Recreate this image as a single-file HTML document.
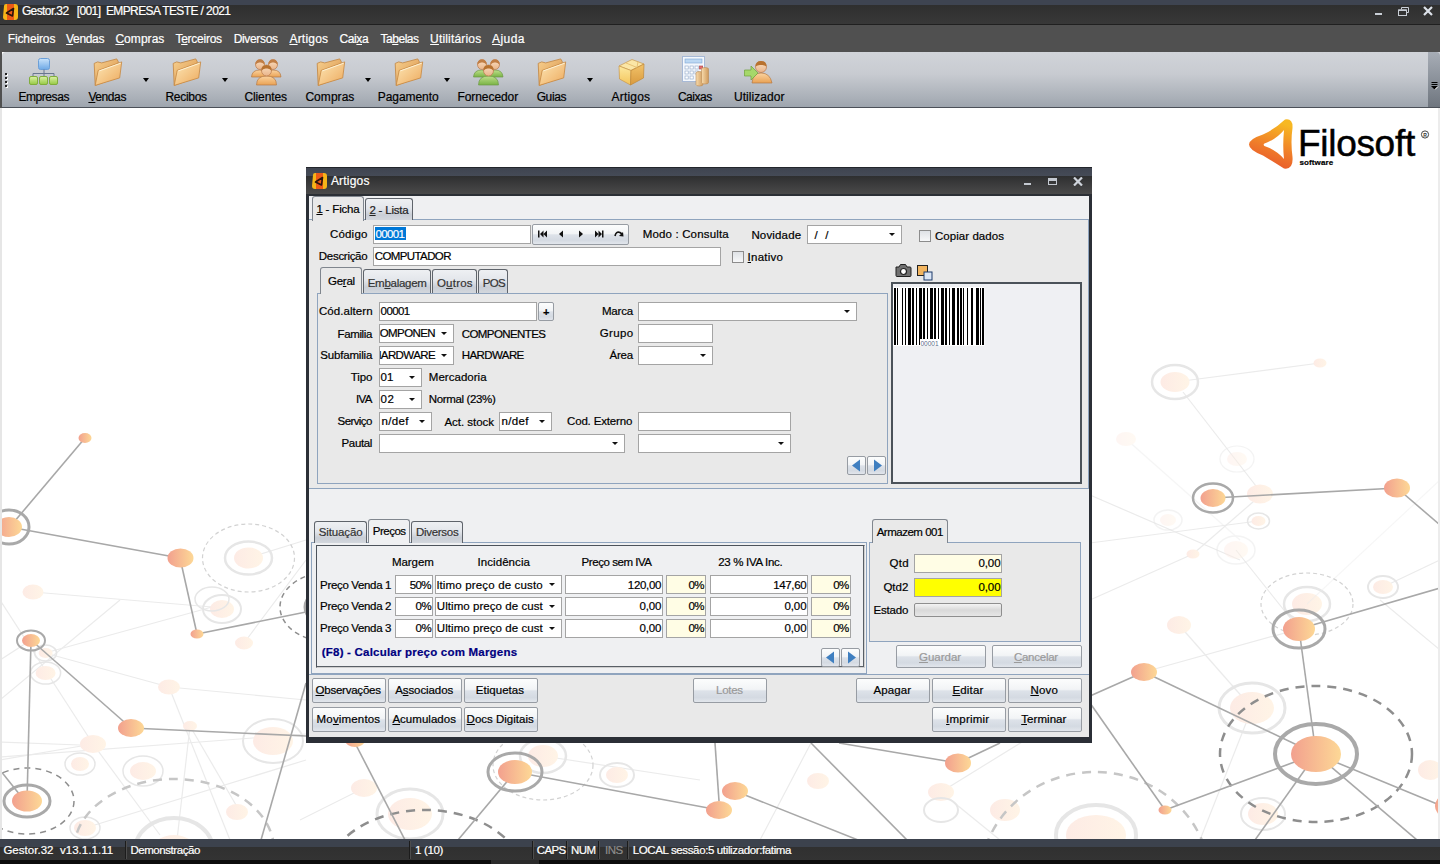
<!DOCTYPE html><html><head><meta charset="utf-8"><style>
*{margin:0;padding:0;box-sizing:border-box}
html,body{width:1440px;height:864px;overflow:hidden;background:#fff}
body{position:relative;font-family:"Liberation Sans",sans-serif;font-size:11.5px;color:#000}
.a{position:absolute}
.t{position:absolute;white-space:nowrap;line-height:13px;-webkit-text-stroke:0.2px currentColor}
u{text-decoration:underline;text-underline-offset:1px}
.inp{background:#fff;border:1px solid #a4a4a4}
.arr{position:absolute;width:0;height:0;border-left:3px solid transparent;border-right:3px solid transparent;border-top:3px solid #111}
.clip{position:absolute;overflow:hidden}
.btn{border:1px solid #979ca3;border-radius:2px;background:linear-gradient(#fcfdfd 0%,#f2f4f6 45%,#dde2e9 52%,#d4dae2 80%,#e2e6ec 100%)}
.tabi{border:1px solid #5f646b;border-bottom:none;border-radius:3px 3px 0 0;background:linear-gradient(#eef0f3 0%,#e3e6eb 45%,#c9ced6 75%,#d3d7dd 100%)}
.taba{border:1px solid #80868e;border-bottom:none;border-radius:3px 3px 0 0}
</style></head><body>
<svg class="a" style="left:0;top:0" width="1440" height="864" viewBox="0 0 1440 864">
<defs><linearGradient id="ng" x1="0" x2="1" y1="0" y2="0"><stop offset="0" stop-color="#f2a08e"/><stop offset="1" stop-color="#fdd896"/></linearGradient>
<linearGradient id="fg" x1="0" x2="1" y1="0" y2="0"><stop offset="0" stop-color="#fdebe5"/><stop offset="1" stop-color="#fff4e6"/></linearGradient>
<clipPath id="desk"><rect x="2" y="108" width="1436" height="731"/></clipPath></defs>
<rect x="0" y="108" width="2" height="731" fill="#e6e6e6"/><rect x="1438" y="108" width="2" height="731" fill="#ececec"/>
<g clip-path="url(#desk)">
<g stroke="#ebebeb" stroke-width="1.2" fill="none"><path d="M1175 382 L1320 363"/><path d="M1183 392 L1256 486"/><path d="M1261 495 L1193 554"/><path d="M1090 543 L1258 521"/><path d="M1090 495 L1240 560"/><path d="M33 592 L212 607"/><path d="M45 653 L212 607"/><path d="M45 653 L169 687"/><path d="M0 660 L31 640"/><path d="M244 643 L306 560"/><path d="M93 744 L160 835"/><path d="M190 726 L177 840"/><path d="M190 726 L236 805"/><path d="M0 742 L80 745"/><path d="M0 757 L306 734"/><path d="M93 744 L0 760"/><path d="M85 828 L306 760"/><path d="M169 687 L230 840"/><path d="M169 687 L306 700"/><path d="M0 700 L120 600"/><path d="M364 788 L300 820"/><path d="M543 756 L700 780"/><path d="M941 792 L1090 700"/><path d="M941 792 L1000 840"/><path d="M811 743 L760 840"/><path d="M1179 625 L1252 708"/><path d="M1380 600 L1440 650"/><path d="M1252 708 L1200 840"/><path d="M1236 550 L1299 629"/><path d="M1144 672 L1299 629"/><path d="M1193 554 L1090 600"/><path d="M1383 587 L1440 560"/><path d="M248 558 L306 540"/><path d="M0 600 L93 744"/></g>
<g fill="url(#fg)"><ellipse cx="248.5" cy="558" rx="14.5" ry="10.5"/><ellipse cx="222" cy="609" rx="12" ry="9"/><ellipse cx="33" cy="592" rx="10.5" ry="7.5"/><ellipse cx="244" cy="643" rx="9" ry="6.5"/><ellipse cx="169" cy="687" rx="11" ry="7.5"/><ellipse cx="45.6" cy="653" rx="7" ry="5"/><ellipse cx="45.6" cy="673" rx="10" ry="7"/><ellipse cx="93" cy="744" rx="13" ry="9"/><ellipse cx="174" cy="850" rx="22" ry="15"/><ellipse cx="80" cy="764" rx="9" ry="7"/><ellipse cx="143" cy="771" rx="13" ry="9"/><ellipse cx="85" cy="828" rx="11" ry="8"/><ellipse cx="237" cy="812" rx="11" ry="8"/><ellipse cx="190" cy="726" rx="7" ry="5"/><ellipse cx="273" cy="741" rx="20" ry="14"/><ellipse cx="364" cy="788" rx="13" ry="9"/><ellipse cx="410" cy="814" rx="22" ry="16"/><ellipse cx="543" cy="756" rx="15" ry="11"/><ellipse cx="617" cy="775" rx="11" ry="8"/><ellipse cx="941" cy="792" rx="13" ry="9"/><ellipse cx="818" cy="781" rx="11" ry="8"/><ellipse cx="1005" cy="810" rx="15" ry="11"/><ellipse cx="1175" cy="382" rx="14.5" ry="10"/><ellipse cx="1320" cy="363" rx="6.5" ry="4.5"/><ellipse cx="1260" cy="494" rx="13" ry="9.5"/><ellipse cx="1258.5" cy="521" rx="7" ry="5"/><ellipse cx="1193" cy="554" rx="6.5" ry="4.5"/><ellipse cx="1307" cy="604" rx="15" ry="11"/><ellipse cx="1179" cy="625" rx="12" ry="9"/><ellipse cx="1252" cy="708" rx="22" ry="16"/><ellipse cx="1263" cy="814" rx="15" ry="11"/><ellipse cx="1096" cy="835" rx="30" ry="20"/><ellipse cx="1383" cy="587" rx="10" ry="7"/><ellipse cx="1430" cy="770" rx="12" ry="10"/></g>
<g fill="none" stroke="#e6e6e6"><ellipse cx="248.5" cy="558" rx="23.5" ry="16.5" stroke-width="2.5"/><ellipse cx="222" cy="609" rx="19" ry="14" stroke-width="2"/><ellipse cx="45.6" cy="653" rx="11" ry="8" stroke-width="1.5"/><ellipse cx="45.6" cy="673" rx="15" ry="11" stroke-width="1.5"/><ellipse cx="174" cy="850" rx="39" ry="32" stroke-width="4"/><ellipse cx="80" cy="764" rx="15" ry="11" stroke-width="1.5"/><ellipse cx="143" cy="771" rx="20" ry="15" stroke-width="1.5"/><ellipse cx="85" cy="828" rx="15" ry="11" stroke-width="1.5"/><ellipse cx="273" cy="741" rx="30" ry="22" stroke-width="2"/><ellipse cx="543" cy="756" rx="23" ry="17" stroke-width="2.5"/><ellipse cx="410" cy="814" rx="33" ry="25" stroke-width="3"/><ellipse cx="617" cy="775" rx="17" ry="12" stroke-width="2"/><ellipse cx="1175" cy="382" rx="23" ry="17" stroke-width="2.5"/><ellipse cx="1307" cy="604" rx="23" ry="17" stroke-width="2.5"/><ellipse cx="1252" cy="708" rx="33" ry="25" stroke-width="3"/><ellipse cx="1096" cy="835" rx="40" ry="30" stroke-width="4"/><ellipse cx="1263" cy="814" rx="22" ry="16" stroke-width="2"/><ellipse cx="941" cy="810" rx="17" ry="12" stroke-width="2"/><ellipse cx="1258.5" cy="521" rx="11" ry="8" stroke-width="1.5"/><ellipse cx="1383" cy="587" rx="15" ry="11" stroke-width="2"/><ellipse cx="212" cy="599" rx="17" ry="12" stroke-width="1.5"/></g>
<g opacity="0.45"><g stroke="#ebebeb" stroke-width="1.2" fill="none"><path d="M1126 439 L1240 540"/><path d="M1307 604 L1440 480"/></g><g fill="url(#fg)"><ellipse cx="1126" cy="439" rx="10" ry="7"/><ellipse cx="1236" cy="550" rx="12" ry="9"/><ellipse cx="1168" cy="520" rx="8" ry="6"/><ellipse cx="1237" cy="459" rx="10" ry="7"/></g><g fill="none" stroke="#e6e6e6"><ellipse cx="1236" cy="550" rx="19" ry="14" stroke-width="1.5"/><ellipse cx="1168" cy="520" rx="14" ry="10" stroke-width="1.5"/><ellipse cx="1237" cy="459" rx="17" ry="13" stroke-width="1.2"/></g></g>
<g fill="none" stroke="#d2d2d2" stroke-width="1.2" stroke-dasharray="4 3"><ellipse cx="248.5" cy="558" rx="46" ry="34"/><ellipse cx="1307" cy="604" rx="46" ry="31"/><ellipse cx="543" cy="765" rx="50" ry="35"/></g>
<g fill="none" stroke="#c6c6c6"><ellipse cx="1095" cy="880" rx="115" ry="108" stroke-width="2.5" stroke-dasharray="9 7"/><ellipse cx="174" cy="850" rx="100" ry="71" stroke-width="2.5" stroke-dasharray="9 7"/></g>
<g fill="none" stroke="#8e8e8e"><ellipse cx="27" cy="801" rx="47" ry="33" stroke-width="1.5" stroke-dasharray="6 5"/><ellipse cx="330" cy="607" rx="50" ry="35" stroke-width="1.5" stroke-dasharray="5 4"/><ellipse cx="425" cy="880" rx="100" ry="70" stroke-width="2.5" stroke-dasharray="9 7"/><ellipse cx="1316" cy="754" rx="96" ry="68" stroke-width="2.5" stroke-dasharray="9 7"/></g>
<g stroke="#a8a8a8" stroke-width="1.6" fill="none"><path d="M85 438 L14 522"/><path d="M9 527 L180 558"/><path d="M180 558 L197 634"/><path d="M197 634 L306 612"/><path d="M31 640 L27 801"/><path d="M31 640 L131 728"/><path d="M131 728 L306 736"/><path d="M306 683 L261 840"/><path d="M0 770 L20 795"/><path d="M355 743 L405 840"/><path d="M515 772 L458 840"/><path d="M515 772 L719 810"/><path d="M715 743 L719 801"/><path d="M735 791 L858 840"/><path d="M811 743 L907 840"/><path d="M839 743 L958 763"/><path d="M958 763 L1000 743"/><path d="M1213 498 L1397 488"/><path d="M1397 488 L1440 525"/><path d="M1299 629 L1440 588"/><path d="M1090 696 L1144 672"/><path d="M1144 672 L1316 754"/><path d="M1299 629 L1316 754"/><path d="M1316 754 L1165 810"/><path d="M1090 703 L1165 810"/><path d="M1316 754 L1255 840"/><path d="M1316 754 L1417 840"/><path d="M1316 754 L1442 806"/></g>
<g fill="none" stroke="#a9a9a9"><ellipse cx="9" cy="527" rx="20" ry="17" stroke-width="3"/><ellipse cx="31" cy="640.5" rx="14" ry="10" stroke-width="2"/><ellipse cx="27" cy="801" rx="23" ry="16" stroke-width="3"/><ellipse cx="515" cy="772" rx="27" ry="19" stroke-width="3"/><ellipse cx="1213" cy="498" rx="20" ry="14.5" stroke-width="2.5"/><ellipse cx="1299" cy="629" rx="26" ry="19" stroke-width="3"/><ellipse cx="1316" cy="754" rx="41" ry="30" stroke-width="4"/><ellipse cx="330" cy="607" rx="25" ry="18" stroke-width="3"/></g>
<g fill="url(#ng)"><ellipse cx="85" cy="438" rx="6.5" ry="5"/><ellipse cx="9" cy="527" rx="13" ry="10"/><ellipse cx="180.5" cy="558" rx="13" ry="9.5"/><ellipse cx="31" cy="640.5" rx="9" ry="6.5"/><ellipse cx="197" cy="634" rx="6.5" ry="4.5"/><ellipse cx="131" cy="728" rx="13" ry="9"/><ellipse cx="27" cy="801" rx="15" ry="10.5"/><ellipse cx="355" cy="740" rx="10" ry="7"/><ellipse cx="515" cy="772" rx="17" ry="12"/><ellipse cx="735" cy="791" rx="13" ry="9"/><ellipse cx="719" cy="810" rx="13" ry="9"/><ellipse cx="958" cy="763" rx="13" ry="9.5"/><ellipse cx="1213" cy="498" rx="12.5" ry="9"/><ellipse cx="1397" cy="488" rx="13" ry="9.5"/><ellipse cx="1299" cy="629" rx="16" ry="12"/><ellipse cx="1144" cy="672" rx="13" ry="9"/><ellipse cx="1316" cy="754" rx="25" ry="18"/><ellipse cx="1165" cy="810" rx="6.5" ry="4.5"/><ellipse cx="1442" cy="806" rx="7" ry="9"/><ellipse cx="330" cy="607" rx="12" ry="9"/></g>
</g></svg>
<div class="a " style="left:0px;top:0px;width:1440px;height:25px;background:linear-gradient(#3e4451 0,#3e4451 5px,#2f2f2f 5px,#383838 24px,#202020 24px)"></div>
<svg class="a" style="left:2px;top:3px" width="17" height="18" viewBox="0 0 17 18">
<path d="M2 3 Q2 1 4 1 L13 1 Q16 1 16 4 L16 14 Q16 17 13 17 L4 17 Q1 17 1 14 Z" fill="#f6b418"/>
<path d="M5 1 L12 1 L12 17 L5 17 Z" fill="#ec5a16"/>
<path d="M4.5 10 L11.5 5.5 L10.5 13 Z" fill="none" stroke="#2a140c" stroke-width="1.6" stroke-linejoin="round"/>
</svg>
<div class="t" style="left:21.9px;top:5.0px;line-height:13.6px;letter-spacing:-0.60px;color:#fff;font-size:12px;">Gestor.32&nbsp;&nbsp;&nbsp;[001]&nbsp;&nbsp;EMPRESA TESTE / 2021</div>
<div class="a " style="left:1375px;top:13px;width:7px;height:2px;background:#c9ced6"></div>
<svg class="a" style="left:1398px;top:7px" width="11" height="9" viewBox="0 0 11 9"><path d="M3.5 2.5 V0.5 H10.5 V5.5 H8.5" fill="none" stroke="#c9ced6" stroke-width="1"/><rect x="0.5" y="3" width="8" height="5.5" fill="none" stroke="#c9ced6" stroke-width="1"/><rect x="0.5" y="2.5" width="8" height="1.5" fill="#c9ced6"/></svg>
<svg class="a" style="left:1423px;top:6px" width="10" height="10" viewBox="0 0 10 10"><path d="M1 1 L9 9 M9 1 L1 9" stroke="#dde2ea" stroke-width="2.2"/></svg>
<div class="a " style="left:0px;top:25px;width:1440px;height:27px;background:#505050"></div>
<div class="a " style="left:0px;top:52px;width:2px;height:56px;background:#505050"></div>
<div class="t" style="left:7.7px;top:33.0px;line-height:13.6px;letter-spacing:-0.12px;color:#fff;font-size:12px;">Ficheiros</div>
<div class="t" style="left:66.1px;top:33.0px;line-height:13.6px;letter-spacing:-0.35px;color:#fff;font-size:12px;"><u>V</u>endas</div>
<div class="t" style="left:115.4px;top:33.0px;line-height:13.6px;letter-spacing:0.05px;color:#fff;font-size:12px;"><u>C</u>ompras</div>
<div class="t" style="left:175.4px;top:33.0px;line-height:13.6px;letter-spacing:-0.25px;color:#fff;font-size:12px;">T<u>e</u>rceiros</div>
<div class="t" style="left:233.7px;top:33.0px;line-height:13.6px;letter-spacing:-0.33px;color:#fff;font-size:12px;">Diversos</div>
<div class="t" style="left:289.4px;top:33.0px;line-height:13.6px;letter-spacing:0.22px;color:#fff;font-size:12px;"><u>A</u>rtigos</div>
<div class="t" style="left:339.4px;top:33.0px;line-height:13.6px;letter-spacing:-0.35px;color:#fff;font-size:12px;">Cai<u>x</u>a</div>
<div class="t" style="left:380.4px;top:33.0px;line-height:13.6px;letter-spacing:-0.45px;color:#fff;font-size:12px;">Ta<u>b</u>elas</div>
<div class="t" style="left:430.1px;top:33.0px;line-height:13.6px;letter-spacing:0.17px;color:#fff;font-size:12px;"><u>U</u>tilitários</div>
<div class="t" style="left:492.1px;top:33.0px;line-height:13.6px;letter-spacing:0.40px;color:#fff;font-size:12px;"><u>A</u>juda</div>
<div class="a " style="left:2px;top:52px;width:1438px;height:56px;border-radius:4px 0 0 0;background:linear-gradient(#d1d4d9 0%,#c8cbd1 40%,#a9afb7 85%,#9ea5ae 100%);border-bottom:1px solid #4b5058"></div>
<div class="a " style="left:1428px;top:52px;width:12px;height:55px;border-radius:0 4px 0 0;background:linear-gradient(#a7adb6,#6f767f)"></div>
<svg class="a" style="left:1429px;top:81px" width="11" height="10" viewBox="0 0 11 10"><path d="M2.5 1.5 H8.5 M2.5 3.5 H8.5" stroke="#000" stroke-width="1"/><path d="M2 5 H9 L5.5 8.5 Z" fill="#000"/><path d="M6 8.5 L9 5.5" stroke="#fff" stroke-width="1"/></svg>
<div class="a " style="left:5px;top:73px;width:2px;height:2px;background:#222;box-shadow:1px 1px 0 #fff"></div>
<div class="a " style="left:5px;top:77px;width:2px;height:2px;background:#222;box-shadow:1px 1px 0 #fff"></div>
<div class="a " style="left:5px;top:81px;width:2px;height:2px;background:#222;box-shadow:1px 1px 0 #fff"></div>
<div class="a " style="left:5px;top:85px;width:2px;height:2px;background:#222;box-shadow:1px 1px 0 #fff"></div>
<div class="t" style="left:18.4px;top:91.0px;line-height:13.6px;letter-spacing:-0.43px;font-size:12px;">Empresas</div>
<div class="t" style="left:88.4px;top:91.0px;line-height:13.6px;letter-spacing:-0.41px;font-size:12px;"><u>V</u>endas</div>
<div class="t" style="left:165.4px;top:91.0px;line-height:13.6px;letter-spacing:-0.28px;font-size:12px;">Recibos</div>
<div class="t" style="left:244.4px;top:91.0px;line-height:13.6px;letter-spacing:-0.09px;font-size:12px;">Clientes</div>
<div class="t" style="left:305.4px;top:91.0px;line-height:13.6px;letter-spacing:0.05px;font-size:12px;">Compras</div>
<div class="t" style="left:377.7px;top:91.0px;line-height:13.6px;letter-spacing:-0.05px;font-size:12px;">Pagamento</div>
<div class="t" style="left:457.4px;top:91.0px;line-height:13.6px;letter-spacing:-0.06px;font-size:12px;">Fornecedor</div>
<div class="t" style="left:536.7px;top:91.0px;line-height:13.6px;letter-spacing:-0.41px;font-size:12px;">Guias</div>
<div class="t" style="left:611.6px;top:91.0px;line-height:13.6px;letter-spacing:0.19px;font-size:12px;">Artigos</div>
<div class="t" style="left:677.9px;top:91.0px;line-height:13.6px;letter-spacing:-0.48px;font-size:12px;">Caixas</div>
<div class="t" style="left:734.0px;top:91.0px;line-height:13.6px;letter-spacing:0.04px;font-size:12px;">Utilizador</div>
<div class="a" style="left:143px;top:78px;width:0;height:0;border-left:3.5px solid transparent;border-right:3.5px solid transparent;border-top:4px solid #000"></div>
<div class="a" style="left:222px;top:78px;width:0;height:0;border-left:3.5px solid transparent;border-right:3.5px solid transparent;border-top:4px solid #000"></div>
<div class="a" style="left:365px;top:78px;width:0;height:0;border-left:3.5px solid transparent;border-right:3.5px solid transparent;border-top:4px solid #000"></div>
<div class="a" style="left:444px;top:78px;width:0;height:0;border-left:3.5px solid transparent;border-right:3.5px solid transparent;border-top:4px solid #000"></div>
<div class="a" style="left:587px;top:78px;width:0;height:0;border-left:3.5px solid transparent;border-right:3.5px solid transparent;border-top:4px solid #000"></div>
<svg class="a" style="left:0;top:50px" width="800" height="45" viewBox="0 50 800 45">
<defs>
<linearGradient id="fold" x1="0" y1="0" x2="1" y2="1"><stop offset="0" stop-color="#fde8b8"/><stop offset="1" stop-color="#eda95c"/></linearGradient>
<linearGradient id="foldb" x1="0" y1="0" x2="1" y2="1"><stop offset="0" stop-color="#f7d08f"/><stop offset="1" stop-color="#d9934a"/></linearGradient>
<linearGradient id="blu" x1="0" y1="0" x2="0" y2="1"><stop offset="0" stop-color="#c9e3fb"/><stop offset="1" stop-color="#6ea9e6"/></linearGradient>
<linearGradient id="grn" x1="0" y1="0" x2="0" y2="1"><stop offset="0" stop-color="#dcf1a6"/><stop offset="1" stop-color="#96c944"/></linearGradient>
<linearGradient id="skin" x1="0" y1="0" x2="0" y2="1"><stop offset="0" stop-color="#fbe0c2"/><stop offset="1" stop-color="#e9b48a"/></linearGradient>
<linearGradient id="body" x1="0" y1="0" x2="0" y2="1"><stop offset="0" stop-color="#fbd3a0"/><stop offset="1" stop-color="#e9a254"/></linearGradient>
<linearGradient id="bodyg" x1="0" y1="0" x2="0" y2="1"><stop offset="0" stop-color="#bfe08c"/><stop offset="1" stop-color="#79b345"/></linearGradient>
<linearGradient id="box1" x1="0" y1="0" x2="0" y2="1"><stop offset="0" stop-color="#fde9a0"/><stop offset="1" stop-color="#f3c45a"/></linearGradient>
<linearGradient id="box2" x1="0" y1="0" x2="0" y2="1"><stop offset="0" stop-color="#f2c36a"/><stop offset="1" stop-color="#d99a3e"/></linearGradient>
<linearGradient id="coin" x1="0" y1="0" x2="1" y2="0"><stop offset="0" stop-color="#f8dcae"/><stop offset="1" stop-color="#cf9a5c"/></linearGradient>
<g id="folder">
<path d="M0.5 5 L4 3.5 L8 4.5 L23 0.5 L24.5 3 L24.5 19 L1.5 27 Z" fill="url(#foldb)" stroke="#c2843f" stroke-width="0.8"/>
<path d="M1.5 27 L4.5 12 L28 3.5 L26 19.5 Z" fill="url(#fold)" stroke="#c58843" stroke-width="0.8"/>
<path d="M5.5 12.5 L27 4.8" stroke="#fff6dc" stroke-width="0.9"/>
</g>
<g id="people">
<circle cx="7" cy="5.5" r="4" fill="url(#skin)" stroke="#b9794a" stroke-width="0.7"/>
<circle cx="21" cy="5.5" r="4" fill="url(#skin)" stroke="#b9794a" stroke-width="0.7"/>
<path d="M0.5 17 Q1 10 7 10 Q13 10 13.5 17 Z" fill="BODY" stroke="#b57a46" stroke-width="0.7"/>
<path d="M14.5 17 Q15 10 21 10 Q27 10 27.5 17 Z" fill="BODY" stroke="#b57a46" stroke-width="0.7"/>
<circle cx="14" cy="10.5" r="4.6" fill="url(#skin)" stroke="#b9794a" stroke-width="0.7"/>
<path d="M9.5 9 Q10 5 14 5 Q18 5 18.5 9 Q16 7.5 14 8 Q11 7.5 9.5 9Z" fill="#c07a3c"/>
<path d="M5.5 26 Q6 16 14 16 Q22 16 22.5 26 Z" fill="BODY" stroke="#b57a46" stroke-width="0.7"/>
</g>
</defs>
<!-- Empresas -->
<rect x="38.5" y="58.5" width="11" height="11" rx="2" fill="url(#blu)" stroke="#6b9fd8"/>
<path d="M44 69.5 V76 M33 76 V73.5 H54 V76" fill="none" stroke="#6a7690" stroke-width="1"/>
<rect x="29.5" y="76.5" width="8" height="8" rx="1.5" fill="url(#grn)" stroke="#80ad3d"/>
<rect x="39.5" y="76.5" width="8" height="8" rx="1.5" fill="url(#grn)" stroke="#80ad3d"/>
<rect x="49.5" y="76.5" width="8" height="8" rx="1.5" fill="url(#grn)" stroke="#80ad3d"/>
<!-- folders -->
<use href="#folder" x="93.7" y="58.4"/>
<use href="#folder" x="172.7" y="58.4"/>
<use href="#folder" x="316.7" y="58.4"/>
<use href="#folder" x="394.7" y="58.4"/>
<use href="#folder" x="537.7" y="58.4"/>
<!-- Clientes -->
<g transform="translate(251,59)">
<path d="M0.5 18 Q1 11 8.5 11 Q15 11 15.5 18 Z" fill="url(#body)" stroke="#b57a46" stroke-width="0.7"/>
<path d="M14.5 18 Q15 11 22 11 Q29.5 11 30 18 Z" fill="url(#body)" stroke="#b57a46" stroke-width="0.7"/>
<ellipse cx="9" cy="5.5" rx="4.5" ry="5" fill="url(#skin)" stroke="#b9794a" stroke-width="0.7"/>
<path d="M4.5 6 Q4 0.5 9 0.5 Q14 0.5 13.5 6 Q12 3 9 3.5 Q6 3 4.5 6Z" fill="#c07e45"/>
<ellipse cx="22" cy="5.5" rx="4.5" ry="5" fill="url(#skin)" stroke="#b9794a" stroke-width="0.7"/>
<path d="M17.5 6 Q17 0.5 22 0.5 Q27 0.5 26.5 6 Q25 3 22 3.5 Q19 3 17.5 6Z" fill="#c07e45"/>
<path d="M5.5 26 Q5.5 17 15.5 17 Q25.5 17 25.5 26 Z" fill="url(#body)" stroke="#b57a46" stroke-width="0.7"/>
<ellipse cx="15.5" cy="11.5" rx="5" ry="5.5" fill="url(#skin)" stroke="#b9794a" stroke-width="0.7"/>
<path d="M10.5 12 Q10 6 15.5 6 Q21 6 20.5 12 Q19 9 15.5 9.5 Q12 9 10.5 12Z" fill="#b8722f"/>
</g>
<!-- Fornecedor -->
<g transform="translate(473,59)">
<path d="M0.5 18 Q1 11 8.5 11 Q15 11 15.5 18 Z" fill="url(#bodyg)" stroke="#6f9a48" stroke-width="0.7"/>
<path d="M14.5 18 Q15 11 22 11 Q29.5 11 30 18 Z" fill="url(#bodyg)" stroke="#6f9a48" stroke-width="0.7"/>
<ellipse cx="9" cy="5.5" rx="4.5" ry="5" fill="url(#skin)" stroke="#b9794a" stroke-width="0.7"/>
<path d="M4.5 6 Q4 0.5 9 0.5 Q14 0.5 13.5 6 Q12 3 9 3.5 Q6 3 4.5 6Z" fill="#c07e45"/>
<ellipse cx="22" cy="5.5" rx="4.5" ry="5" fill="url(#skin)" stroke="#b9794a" stroke-width="0.7"/>
<path d="M17.5 6 Q17 0.5 22 0.5 Q27 0.5 26.5 6 Q25 3 22 3.5 Q19 3 17.5 6Z" fill="#c07e45"/>
<path d="M5.5 26 Q5.5 17 15.5 17 Q25.5 17 25.5 26 Z" fill="url(#bodyg)" stroke="#6f9a48" stroke-width="0.7"/>
<ellipse cx="15.5" cy="11.5" rx="5" ry="5.5" fill="url(#skin)" stroke="#b9794a" stroke-width="0.7"/>
<path d="M10.5 12 Q10 6 15.5 6 Q21 6 20.5 12 Q19 9 15.5 9.5 Q12 9 10.5 12Z" fill="#b8722f"/>
</g>
<!-- Artigos box -->
<g transform="translate(618,58)">
<path d="M1 8 L14 1.5 L26 6 L13 12.5 Z" fill="#fbe6a6" stroke="#c9974a" stroke-width="0.7"/>
<path d="M1 8 L13 12.5 L12.5 27 L1.5 21 Z" fill="url(#box1)" stroke="#c9974a" stroke-width="0.7"/>
<path d="M13 12.5 L26 6 L25.5 20 L12.5 27 Z" fill="url(#box2)" stroke="#c08838" stroke-width="0.7"/>
<path d="M8 5 L19 9.5 L20 3.5" fill="none" stroke="#e2b766" stroke-width="0.8"/>
</g>
<!-- Caixas -->
<g transform="translate(682,56)">
<rect x="0.5" y="0.5" width="22" height="25" fill="#f4f8fd" stroke="#a7b9d6"/>
<rect x="3" y="3" width="17" height="4" fill="#bcd8f3" stroke="#7ea6d3" stroke-width="0.6"/>
<g fill="#fff" stroke="#8aa3c6" stroke-width="0.6">
<rect x="3" y="10" width="3.2" height="3"/><rect x="8" y="10" width="3.2" height="3"/><rect x="13" y="10" width="3.2" height="3"/>
<rect x="3" y="15" width="3.2" height="3"/><rect x="8" y="15" width="3.2" height="3"/><rect x="13" y="15" width="3.2" height="3"/>
<rect x="3" y="20" width="3.2" height="3"/><rect x="8" y="20" width="3.2" height="3"/>
</g>
<rect x="17.5" y="10" width="3.2" height="3" fill="#e36d6d" stroke="#b04444" stroke-width="0.6"/>
<path d="M14 17 Q14 15.5 17.5 15.5 Q21 15.5 21 17 V28.5 Q21 30 17.5 30 Q14 30 14 28.5 Z" fill="url(#coin)" stroke="#b98a54" stroke-width="0.6"/>
<path d="M19.5 13 Q19.5 11.5 23 11.5 Q26.5 11.5 26.5 13 V26.5 Q26.5 28 23 28 Q19.5 28 19.5 26.5 Z" fill="url(#coin)" stroke="#b98a54" stroke-width="0.6"/>
</g>
<!-- Utilizador -->
<g transform="translate(744,60)">
<circle cx="17" cy="7" r="5.5" fill="url(#skin)" stroke="#b9794a" stroke-width="0.7"/>
<path d="M11.5 6.5 Q11.5 1 17 1 Q22.5 1 22.5 6.5 Q20 4.5 17 5 Q14 4.5 11.5 6.5Z" fill="#b8722f"/>
<path d="M8 23 Q9 13 17 13 Q26 13 28 23 Z" fill="url(#body)" stroke="#b57a46" stroke-width="0.7"/>
<path d="M0.5 10 H7 V6 L14 13 L7 20 V16 H0.5 Z" fill="#a6d86a" stroke="#6ea23a" stroke-width="0.7"/>
</g>
</svg>
<!-- Filosoft logo -->
<svg class="a" style="left:1244px;top:116px" width="56" height="56" viewBox="0 0 56 56">
<defs><linearGradient id="lg" x1="0.5" y1="0" x2="0.2" y2="1"><stop offset="0" stop-color="#f7b823"/><stop offset="0.55" stop-color="#ef7a2a"/><stop offset="1" stop-color="#e6502b"/></linearGradient></defs>
<path fill="url(#lg)" fill-rule="evenodd" d="M41 3.5 Q49 2 48.5 12 Q46.5 26 48.5 41 Q49.5 54 40 52.5 Q31 47 19 39.5 Q5 34 5 28.5 Q5 23 19 18.5 Q31 13 41 3.5 Z M40 14 Q33 22.5 23 26.5 Q16 28.5 23 31 Q33 35 40 43 Q38.5 30 40 14 Z"/></svg>
<div class="t" style="left:1298px;top:121px;font-size:37px;line-height:46px;letter-spacing:-0.3px;-webkit-text-stroke:0.5px #000">Filosoft</div>
<div class="t" style="left:1299.5px;top:158px;font-size:8px;line-height:10px;font-weight:bold;letter-spacing:0.1px">software</div>
<svg class="a" style="left:1420px;top:130px" width="10" height="9" viewBox="0 0 10 9"><circle cx="5" cy="4.5" r="3.6" fill="none" stroke="#333" stroke-width="0.9"/><text x="5" y="6.6" font-size="5" text-anchor="middle" font-family="Liberation Sans" font-weight="bold" fill="#333">R</text></svg>

<div class="a " style="left:0px;top:839px;width:1440px;height:25px;background:linear-gradient(#3c424d 0,#3c424d 8px,#303030 8px,#333 21px,#0c0c0c 21px)"></div>
<div class="a " style="left:491px;top:860px;width:48px;height:4px;background:#2a2a2a"></div>
<div class="a " style="left:125px;top:841px;width:1px;height:18px;background:#1c1c1c;box-shadow:1px 0 0 #4d4d4d"></div>
<div class="a " style="left:409px;top:841px;width:1px;height:18px;background:#1c1c1c;box-shadow:1px 0 0 #4d4d4d"></div>
<div class="a " style="left:532px;top:841px;width:1px;height:18px;background:#1c1c1c;box-shadow:1px 0 0 #4d4d4d"></div>
<div class="a " style="left:566px;top:841px;width:1px;height:18px;background:#1c1c1c;box-shadow:1px 0 0 #4d4d4d"></div>
<div class="a " style="left:598px;top:841px;width:1px;height:18px;background:#1c1c1c;box-shadow:1px 0 0 #4d4d4d"></div>
<div class="a " style="left:627px;top:841px;width:1px;height:18px;background:#1c1c1c;box-shadow:1px 0 0 #4d4d4d"></div>
<div class="t" style="left:3.4px;top:843.5px;line-height:13.0px;letter-spacing:0.03px;color:#fff;">Gestor.32&nbsp;&nbsp;v13.1.1.11</div>
<div class="t" style="left:130.4px;top:843.5px;line-height:13.0px;letter-spacing:-0.44px;color:#fff;">Demonstração</div>
<div class="t" style="left:415.1px;top:843.5px;line-height:13.0px;letter-spacing:-0.35px;color:#fff;">1 (10)</div>
<div class="t" style="left:536.7px;top:843.5px;line-height:13.0px;letter-spacing:-0.60px;color:#fff;">CAPS</div>
<div class="t" style="left:571.1px;top:843.5px;line-height:13.0px;letter-spacing:-0.60px;color:#fff;">NUM</div>
<div class="t" style="left:605.1px;top:843.5px;line-height:13.0px;letter-spacing:-0.60px;color:#8c8c8c;">INS</div>
<div class="t" style="left:632.7px;top:843.5px;line-height:13.0px;letter-spacing:-0.37px;color:#fff;">LOCAL sessão:5 utilizador:fatima</div>
<div class="a " style="left:306px;top:167px;width:786px;height:576px;background:#2b2f36"></div>
<div class="a " style="left:306px;top:167px;width:786px;height:29px;background:linear-gradient(#23262b 0,#23262b 1px,#3f4450 1px,#454b57 9px,#2e2f30 9px,#4a4a4a 27px,#2b2f35 27px)"></div>
<svg class="a" style="left:311px;top:172px" width="17" height="18" viewBox="0 0 17 18">
<path d="M2 3 Q2 1 4 1 L13 1 Q16 1 16 4 L16 14 Q16 17 13 17 L4 17 Q1 17 1 14 Z" fill="#f6b418"/>
<path d="M5 1 L12 1 L12 17 L5 17 Z" fill="#ec5a16"/>
<path d="M4.5 10 L11.5 5.5 L10.5 13 Z" fill="none" stroke="#2a140c" stroke-width="1.6" stroke-linejoin="round"/>
</svg>
<div class="t" style="left:330.9px;top:175.0px;line-height:13.6px;letter-spacing:0.19px;color:#fff;font-size:12px;">Artigos</div>
<div class="a " style="left:1024px;top:183px;width:7px;height:2px;background:#c4c9d1"></div>
<div class="a " style="left:1048px;top:178px;width:9px;height:7px;border:1px solid #c4c9d1;border-top-width:3px"></div>
<svg class="a" style="left:1073px;top:177px" width="10" height="9" viewBox="0 0 10 9"><path d="M1 0.5 L9 8.5 M9 0.5 L1 8.5" stroke="#cfd4dc" stroke-width="2.2"/></svg>
<div class="a " style="left:309px;top:196px;width:780px;height:541px;background:#eff0f2"></div>
<div class="a " style="left:309px;top:219px;width:780px;height:270px;background:#e9e9e9;border:1px solid #8fa4be;border-left:none"></div>
<div class="a taba" style="left:312px;top:196px;width:52px;height:25px;background:#e9e9e9"></div>
<div class="t" style="left:316.4px;top:202.5px;line-height:13.0px;letter-spacing:-0.18px;"><u>1</u> - Ficha</div>
<div class="a tabi" style="left:365px;top:198px;width:48px;height:22px;"></div>
<div class="t" style="left:369.4px;top:203.5px;line-height:13.0px;letter-spacing:-0.20px;color:#222;"><u>2</u> - Lista</div>
<div class="a inp" style="left:373px;top:225px;width:158px;height:19px;background:#fff;"></div>
<div class="a " style="left:375px;top:227px;width:31px;height:13px;background:#0078d7"></div>
<div class="t" style="left:375.4px;top:227.5px;line-height:13.0px;letter-spacing:-0.60px;color:#fff;">00001</div>
<div class="t" style="left:329.9px;top:227.5px;line-height:13.0px;letter-spacing:0.21px;">Código</div>
<div class="a btn" style="left:532px;top:224px;width:97px;height:21px;"></div>
<svg class="a" style="left:536px;top:229px" width="90" height="12" viewBox="0 0 90 12">
<g fill="#111">
<rect x="2" y="1.5" width="1.5" height="7"/><path d="M4 5 L7.5 1.5 V8.5 Z M7.5 5 L11 1.5 V8.5 Z"/>
<path d="M23 5 L27 1.5 V8.5 Z"/>
<path d="M43 1.5 L47 5 L43 8.5 Z"/>
<path d="M59 1.5 L62.5 5 L59 8.5 Z M62.5 1.5 L66 5 L62.5 8.5 Z"/><rect x="66" y="1.5" width="1.5" height="7"/>
</g>
<path d="M79 7 Q80 2 84 3.5 L86 5" fill="none" stroke="#111" stroke-width="1.6"/><path d="M83 7 L87.5 7.5 L87 3 Z" fill="#111"/>
</svg>
<div class="t" style="left:642.7px;top:227.5px;line-height:13.0px;letter-spacing:0.16px;">Modo : Consulta</div>
<div class="t" style="left:751.4px;top:228.5px;line-height:13.0px;letter-spacing:0.16px;">Novidade</div>
<div class="a inp" style="left:807px;top:225px;width:95px;height:19px;background:#fff;"></div>
<div class="arr" style="left:889px;top:233px"></div>
<div class="t" style="left:814.4px;top:228.5px;line-height:13.0px;letter-spacing:0.40px;">/&nbsp;&nbsp;/</div>
<div class="a " style="left:919px;top:230px;width:12px;height:12px;border:1px solid #8c8c8c;background:linear-gradient(#dfe2e6,#f7f8f9)"></div>
<div class="t" style="left:934.9px;top:229.5px;line-height:13.0px;letter-spacing:0.06px;">Copiar dados</div>
<div class="a inp" style="left:373px;top:247px;width:348px;height:19px;background:#fff;"></div>
<div class="t" style="left:318.8px;top:249.5px;line-height:13.0px;letter-spacing:-0.29px;">Descrição</div>
<div class="t" style="left:374.7px;top:249.5px;line-height:13.0px;letter-spacing:-0.60px;">COMPUTADOR</div>
<div class="a " style="left:732px;top:251px;width:12px;height:12px;border:1px solid #8c8c8c;background:linear-gradient(#dfe2e6,#f7f8f9)"></div>
<div class="t" style="left:747.6px;top:250.5px;line-height:13.0px;letter-spacing:0.22px;"><u>I</u>nativo</div>
<div class="a " style="left:317px;top:293px;width:571px;height:191px;border:1px solid #8fa4be"></div>
<div class="a taba" style="left:320px;top:267px;width:42px;height:27px;background:#e9e9e9"></div>
<div class="t" style="left:328.1px;top:274.5px;line-height:13.0px;letter-spacing:-0.30px;">Ge<u>r</u>al</div>
<div class="a tabi" style="left:363px;top:269px;width:68px;height:24px;"></div>
<div class="t" style="left:367.7px;top:276.5px;line-height:13.0px;letter-spacing:-0.28px;color:#333;">Em<u>b</u>alagem</div>
<div class="a tabi" style="left:432px;top:269px;width:45px;height:24px;"></div>
<div class="t" style="left:436.9px;top:276.5px;line-height:13.0px;letter-spacing:0.23px;color:#333;">O<u>u</u>tros</div>
<div class="a tabi" style="left:478px;top:269px;width:30px;height:24px;"></div>
<div class="t" style="left:482.7px;top:276.5px;line-height:13.0px;letter-spacing:-0.60px;color:#333;">POS</div>
<div class="t" style="left:318.9px;top:304.5px;line-height:13.0px;letter-spacing:0.07px;">Cód.altern</div>
<div class="a inp" style="left:379px;top:302px;width:158px;height:19px;background:#fff;"></div>
<div class="t" style="left:380.6px;top:304.5px;line-height:13.0px;letter-spacing:-0.60px;">00001</div>
<div class="a btn" style="left:538px;top:302px;width:16px;height:19px;"></div>
<div class="t" style="top:305.5px;left:546px;transform:translateX(-50%);font-weight:bold;font-size:11px;letter-spacing:-0.25px">+</div>
<div class="t" style="left:337.5px;top:327.5px;line-height:13.0px;letter-spacing:-0.36px;">Familia</div>
<div class="a inp" style="left:379px;top:324px;width:75px;height:19px;background:#fff;"></div>
<div class="arr" style="left:441px;top:332px"></div>
<div class="clip" style="left:380px;top:325px;width:56px;height:17px"><div class="t" style="right:1px;top:1.5px;letter-spacing:-0.6px">COMPONEN</div></div>
<div class="t" style="left:461.8px;top:327.5px;line-height:13.0px;letter-spacing:-0.60px;">COMPONENTES</div>
<div class="t" style="left:320.2px;top:348.5px;line-height:13.0px;letter-spacing:-0.17px;">Subfamilia</div>
<div class="a inp" style="left:379px;top:346px;width:75px;height:19px;background:#fff;"></div>
<div class="arr" style="left:441px;top:354px"></div>
<div class="clip" style="left:380px;top:347px;width:56px;height:17px"><div class="t" style="right:1px;top:1.5px;letter-spacing:-0.6px">HARDWARE</div></div>
<div class="t" style="left:461.8px;top:348.5px;line-height:13.0px;letter-spacing:-0.60px;">HARDWARE</div>
<div class="t" style="left:350.7px;top:370.5px;line-height:13.0px;letter-spacing:-0.08px;">Tipo</div>
<div class="a inp" style="left:379px;top:368px;width:43px;height:19px;background:#fff;"></div>
<div class="arr" style="left:409px;top:376px"></div>
<div class="t" style="left:380.6px;top:370.5px;line-height:13.0px;letter-spacing:0.00px;">01</div>
<div class="t" style="left:428.8px;top:370.5px;line-height:13.0px;letter-spacing:0.03px;">Mercadoria</div>
<div class="t" style="left:355.9px;top:392.5px;line-height:13.0px;letter-spacing:-0.60px;">IVA</div>
<div class="a inp" style="left:379px;top:390px;width:43px;height:19px;background:#fff;"></div>
<div class="arr" style="left:409px;top:398px"></div>
<div class="t" style="left:380.6px;top:392.5px;line-height:13.0px;letter-spacing:0.40px;">02</div>
<div class="t" style="left:428.8px;top:392.5px;line-height:13.0px;letter-spacing:-0.36px;">Normal (23%)</div>
<div class="t" style="left:337.6px;top:414.5px;line-height:13.0px;letter-spacing:-0.60px;">Serviço</div>
<div class="a inp" style="left:379px;top:412px;width:53px;height:19px;background:#fff;"></div>
<div class="arr" style="left:419px;top:420px"></div>
<div class="t" style="left:381.4px;top:414.5px;line-height:13.0px;letter-spacing:0.40px;">n/def</div>
<div class="t" style="left:444.4px;top:415.5px;line-height:13.0px;letter-spacing:-0.02px;">Act. stock</div>
<div class="a inp" style="left:499px;top:412px;width:53px;height:19px;background:#fff;"></div>
<div class="arr" style="left:539px;top:420px"></div>
<div class="t" style="left:501.4px;top:414.5px;line-height:13.0px;letter-spacing:0.40px;">n/def</div>
<div class="t" style="left:567.0px;top:414.5px;line-height:13.0px;letter-spacing:-0.16px;">Cod. Externo</div>
<div class="a inp" style="left:638px;top:412px;width:153px;height:19px;background:#fff;"></div>
<div class="t" style="left:341.5px;top:436.5px;line-height:13.0px;letter-spacing:-0.34px;">Pautal</div>
<div class="a inp" style="left:379px;top:434px;width:246px;height:19px;background:#fff;"></div>
<div class="arr" style="left:612px;top:442px"></div>
<div class="a inp" style="left:638px;top:434px;width:153px;height:19px;background:#fff;"></div>
<div class="arr" style="left:778px;top:442px"></div>
<div class="t" style="left:601.9px;top:304.5px;line-height:13.0px;letter-spacing:-0.19px;">Marca</div>
<div class="a inp" style="left:638px;top:302px;width:219px;height:19px;background:#fff;"></div>
<div class="arr" style="left:844px;top:310px"></div>
<div class="t" style="left:599.8px;top:326.5px;line-height:13.0px;letter-spacing:0.33px;">Grupo</div>
<div class="a inp" style="left:638px;top:324px;width:75px;height:19px;background:#fff;"></div>
<div class="t" style="left:609.6px;top:348.5px;line-height:13.0px;letter-spacing:-0.27px;">Área</div>
<div class="a inp" style="left:638px;top:346px;width:75px;height:19px;background:#fff;"></div>
<div class="arr" style="left:700px;top:354px"></div>
<div class="a btn" style="left:847px;top:456px;width:19px;height:19px;"></div>
<div class="a btn" style="left:867px;top:456px;width:19px;height:19px;"></div>
<svg class="a" style="left:847px;top:456px" width="40" height="19" viewBox="0 0 40 19"><path d="M5 9.5 L13 3.5 V15.5 Z M35 9.5 L27 3.5 V15.5 Z" fill="#3f7fc0"/></svg>
<div class="a " style="left:891px;top:282px;width:191px;height:202px;border:2px solid #4b5259;background:#eff0f3"></div>
<svg class="a" style="left:893px;top:287px" width="92" height="60" viewBox="893 287 92 60"><rect x="893" y="287" width="91.5" height="59" fill="#fff"/><rect x="894" y="288" width="2" height="57" fill="#000"/><rect x="897" y="288" width="1" height="57" fill="#000"/><rect x="902" y="288" width="1" height="57" fill="#000"/><rect x="905" y="288" width="1" height="57" fill="#000"/><rect x="908" y="288" width="3" height="57" fill="#000"/><rect x="912" y="288" width="2" height="57" fill="#000"/><rect x="916" y="288" width="1" height="57" fill="#000"/><rect x="919" y="288" width="3" height="57" fill="#000"/><rect x="923" y="288" width="2" height="57" fill="#000"/><rect x="927" y="288" width="1" height="57" fill="#000"/><rect x="930" y="288" width="3" height="57" fill="#000"/><rect x="934" y="288" width="2" height="57" fill="#000"/><rect x="938" y="288" width="1" height="57" fill="#000"/><rect x="941" y="288" width="3" height="57" fill="#000"/><rect x="945" y="288" width="2" height="57" fill="#000"/><rect x="949" y="288" width="1" height="57" fill="#000"/><rect x="952" y="288" width="3" height="57" fill="#000"/><rect x="957" y="288" width="2" height="57" fill="#000"/><rect x="960" y="288" width="2" height="57" fill="#000"/><rect x="963" y="288" width="1" height="57" fill="#000"/><rect x="967" y="288" width="1" height="57" fill="#000"/><rect x="971" y="288" width="2" height="57" fill="#000"/><rect x="976" y="288" width="3" height="57" fill="#000"/><rect x="980" y="288" width="1" height="57" fill="#000"/><rect x="982" y="288" width="2" height="57" fill="#000"/><rect x="920" y="339" width="19.5" height="7" fill="#fff"/><text x="929.5" y="345.5" font-size="6.5" text-anchor="middle" font-family="Liberation Sans" fill="#5a6a8a">00001</text></svg>
<svg class="a" style="left:895px;top:262px" width="40" height="20" viewBox="0 0 40 20">
<path d="M1 5 H4 L5.5 2.5 H10.5 L12 5 H15 Q16 5 16 6 V13.5 Q16 14.5 15 14.5 H2 Q1 14.5 1 13.5 Z" fill="#707070" stroke="#202020" stroke-width="1"/>
<circle cx="8.5" cy="9.5" r="3" fill="#fff" stroke="#202020" stroke-width="1.2"/>
<rect x="22.5" y="3.5" width="10" height="10" fill="#f2b560" stroke="#222" stroke-width="1"/>
<rect x="29" y="10" width="8" height="8" fill="#dbe6f6" stroke="#1d3a6a" stroke-width="1"/>
</svg>
<div class="a " style="left:311px;top:542px;width:556px;height:132px;border:1px solid #8fa4be;background:#eff0f2"></div>
<div class="a tabi" style="left:314px;top:521px;width:53px;height:22px;"></div>
<div class="t" style="left:318.8px;top:525.5px;line-height:13.0px;letter-spacing:-0.14px;color:#333;">Situação</div>
<div class="a taba" style="left:368px;top:519px;width:42px;height:24px;background:#eff0f2"></div>
<div class="t" style="left:372.7px;top:524.5px;line-height:13.0px;letter-spacing:-0.48px;">Preços</div>
<div class="a tabi" style="left:411px;top:521px;width:52px;height:22px;"></div>
<div class="t" style="left:416.0px;top:525.5px;line-height:13.0px;letter-spacing:-0.30px;color:#333;">Diversos</div>
<div class="a " style="left:316px;top:545px;width:549px;height:123px;border:1px solid #4d535b;border-right-color:#d0d0d0;border-bottom-color:#cfcfcf;box-shadow:inset -1px -1px 0 #595f66"></div>
<div class="t" style="left:391.9px;top:555.5px;line-height:13.0px;letter-spacing:-0.04px;">Margem</div>
<div class="t" style="left:477.5px;top:555.5px;line-height:13.0px;letter-spacing:0.07px;">Incidência</div>
<div class="t" style="left:581.6px;top:555.5px;line-height:13.0px;letter-spacing:-0.45px;">Preço sem IVA</div>
<div class="t" style="left:718.3px;top:555.5px;line-height:13.0px;letter-spacing:-0.32px;">23 % IVA Inc.</div>
<div class="t" style="left:320.1px;top:578.5px;line-height:13.0px;letter-spacing:-0.34px;">Preço Venda 1</div>
<div class="a inp" style="left:395px;top:575px;width:38px;height:19px;background:#fff;"></div>
<div class="t" style="left:409.7px;top:578.5px;line-height:13.0px;letter-spacing:-0.57px;">50%</div>
<div class="a inp" style="left:435px;top:575px;width:127px;height:19px;background:#fff;"></div>
<div class="arr" style="left:549px;top:583px"></div>
<div class="t" style="left:436.8px;top:578.5px;line-height:13.0px;letter-spacing:0.16px;">ltimo preço de custo</div>
<div class="a inp" style="left:565px;top:575px;width:98px;height:19px;background:#fff;"></div>
<div class="t" style="left:627.8px;top:578.5px;line-height:13.0px;letter-spacing:-0.30px;">120,00</div>
<div class="a inp" style="left:666px;top:575px;width:40px;height:19px;background:#fffde5;"></div>
<div class="t" style="left:688.4px;top:578.5px;line-height:13.0px;letter-spacing:-0.60px;">0%</div>
<div class="a inp" style="left:710px;top:575px;width:98px;height:19px;background:#fff;"></div>
<div class="t" style="left:773.2px;top:578.5px;line-height:13.0px;letter-spacing:-0.36px;">147,60</div>
<div class="a inp" style="left:811px;top:575px;width:40px;height:19px;background:#fffde5;"></div>
<div class="t" style="left:833.3px;top:578.5px;line-height:13.0px;letter-spacing:-0.60px;">0%</div>
<div class="t" style="left:320.1px;top:599.5px;line-height:13.0px;letter-spacing:-0.34px;">Preço Venda 2</div>
<div class="a inp" style="left:395px;top:597px;width:38px;height:19px;background:#fff;"></div>
<div class="t" style="left:415.6px;top:599.5px;line-height:13.0px;letter-spacing:-0.60px;">0%</div>
<div class="a inp" style="left:435px;top:597px;width:127px;height:19px;background:#fff;"></div>
<div class="arr" style="left:549px;top:605px"></div>
<div class="t" style="left:436.8px;top:599.5px;line-height:13.0px;letter-spacing:0.06px;">Ultimo preço de cust</div>
<div class="a inp" style="left:565px;top:597px;width:98px;height:19px;background:#fff;"></div>
<div class="t" style="left:639.4px;top:599.5px;line-height:13.0px;letter-spacing:-0.10px;">0,00</div>
<div class="a inp" style="left:666px;top:597px;width:40px;height:19px;background:#fffde5;"></div>
<div class="t" style="left:688.4px;top:599.5px;line-height:13.0px;letter-spacing:-0.60px;">0%</div>
<div class="a inp" style="left:710px;top:597px;width:98px;height:19px;background:#fff;"></div>
<div class="t" style="left:784.4px;top:599.5px;line-height:13.0px;letter-spacing:-0.06px;">0,00</div>
<div class="a inp" style="left:811px;top:597px;width:40px;height:19px;background:#fffde5;"></div>
<div class="t" style="left:833.3px;top:599.5px;line-height:13.0px;letter-spacing:-0.60px;">0%</div>
<div class="t" style="left:320.1px;top:621.5px;line-height:13.0px;letter-spacing:-0.34px;">Preço Venda 3</div>
<div class="a inp" style="left:395px;top:619px;width:38px;height:19px;background:#fff;"></div>
<div class="t" style="left:415.6px;top:621.5px;line-height:13.0px;letter-spacing:-0.60px;">0%</div>
<div class="a inp" style="left:435px;top:619px;width:127px;height:19px;background:#fff;"></div>
<div class="arr" style="left:549px;top:627px"></div>
<div class="t" style="left:436.8px;top:621.5px;line-height:13.0px;letter-spacing:0.06px;">Ultimo preço de cust</div>
<div class="a inp" style="left:565px;top:619px;width:98px;height:19px;background:#fff;"></div>
<div class="t" style="left:639.4px;top:621.5px;line-height:13.0px;letter-spacing:-0.10px;">0,00</div>
<div class="a inp" style="left:666px;top:619px;width:40px;height:19px;background:#fffde5;"></div>
<div class="t" style="left:688.4px;top:621.5px;line-height:13.0px;letter-spacing:-0.60px;">0%</div>
<div class="a inp" style="left:710px;top:619px;width:98px;height:19px;background:#fff;"></div>
<div class="t" style="left:784.4px;top:621.5px;line-height:13.0px;letter-spacing:-0.06px;">0,00</div>
<div class="a inp" style="left:811px;top:619px;width:40px;height:19px;background:#fffde5;"></div>
<div class="t" style="left:833.3px;top:621.5px;line-height:13.0px;letter-spacing:-0.60px;">0%</div>
<div class="t" style="left:321.8px;top:645.5px;line-height:13.0px;letter-spacing:0.21px;color:#000080;font-weight:bold;">(F8) - Calcular preço com Margens</div>
<div class="a btn" style="left:821px;top:648px;width:19px;height:19px;"></div>
<div class="a btn" style="left:841px;top:648px;width:19px;height:19px;"></div>
<svg class="a" style="left:821px;top:648px" width="40" height="19" viewBox="0 0 40 19"><path d="M5 9.5 L13 3.5 V15.5 Z M35 9.5 L27 3.5 V15.5 Z" fill="#3f7fc0"/></svg>
<div class="a " style="left:869px;top:542px;width:212px;height:100px;border:1px solid #8fa4be;background:#e9e9e9"></div>
<div class="a taba" style="left:872px;top:519px;width:76px;height:24px;background:#e9e9e9"></div>
<div class="t" style="left:876.7px;top:525.5px;line-height:13.0px;letter-spacing:-0.49px;">Armazem 001</div>
<div class="t" style="left:889.4px;top:556.5px;line-height:13.0px;letter-spacing:0.33px;">Qtd</div>
<div class="a inp" style="left:914px;top:554px;width:88px;height:19px;background:#fffde5;"></div>
<div class="t" style="left:978.4px;top:556.5px;line-height:13.0px;letter-spacing:-0.06px;">0,00</div>
<div class="t" style="left:883.4px;top:580.5px;line-height:13.0px;letter-spacing:0.02px;">Qtd2</div>
<div class="a inp" style="left:914px;top:578px;width:88px;height:19px;background:#ffff00;"></div>
<div class="t" style="left:978.4px;top:580.5px;line-height:13.0px;letter-spacing:-0.06px;">0,00</div>
<div class="t" style="left:873.6px;top:603.5px;line-height:13.0px;letter-spacing:-0.20px;">Estado</div>
<div class="a " style="left:914px;top:603px;width:88px;height:14px;border:1px solid #8e8e8e;border-radius:2px;background:linear-gradient(#f3f3f3,#d9d9d9 50%,#e6e6e6)"></div>
<div class="a btn" style="left:896px;top:645px;width:90px;height:23px;"></div>
<div class="t" style="left:919.0px;top:650.5px;line-height:13.0px;letter-spacing:-0.00px;color:#9a9a9a;"><u>G</u>uardar</div>
<div class="a btn" style="left:992px;top:645px;width:90px;height:23px;"></div>
<div class="t" style="left:1013.9px;top:650.5px;line-height:13.0px;letter-spacing:-0.25px;color:#9a9a9a;"><u>C</u>ancelar</div>
<div class="a " style="left:309px;top:674px;width:780px;height:63px;background:#e9e9e9;border-top:1px solid #8fa4be"></div>
<div class="a btn" style="left:312px;top:678px;width:74px;height:25px;"></div>
<div class="t" style="left:315.5px;top:683.5px;line-height:13.0px;letter-spacing:-0.23px;"><u>O</u>bservações</div>
<div class="a btn" style="left:388px;top:678px;width:74px;height:25px;"></div>
<div class="t" style="left:395.2px;top:683.5px;line-height:13.0px;letter-spacing:-0.09px;">A<u>s</u>sociados</div>
<div class="a btn" style="left:464px;top:678px;width:74px;height:25px;"></div>
<div class="t" style="left:475.8px;top:683.5px;line-height:13.0px;letter-spacing:0.03px;">Etiquetas</div>
<div class="a btn" style="left:312px;top:707px;width:74px;height:25px;"></div>
<div class="t" style="left:316.6px;top:712.5px;line-height:13.0px;letter-spacing:0.16px;">Mo<u>v</u>imentos</div>
<div class="a btn" style="left:388px;top:707px;width:74px;height:25px;"></div>
<div class="t" style="left:392.4px;top:712.5px;line-height:13.0px;letter-spacing:0.03px;"><u>A</u>cumulados</div>
<div class="a btn" style="left:464px;top:707px;width:74px;height:25px;"></div>
<div class="t" style="left:466.6px;top:712.5px;line-height:13.0px;letter-spacing:-0.00px;"><u>D</u>ocs Digitais</div>
<div class="a btn" style="left:693px;top:678px;width:74px;height:25px;"></div>
<div class="t" style="left:716.1px;top:683.5px;line-height:13.0px;letter-spacing:-0.31px;color:#9a9a9a;">Lotes</div>
<div class="a btn" style="left:856px;top:678px;width:74px;height:25px;"></div>
<div class="t" style="left:873.6px;top:683.5px;line-height:13.0px;letter-spacing:0.10px;">Apagar</div>
<div class="a btn" style="left:932px;top:678px;width:74px;height:25px;"></div>
<div class="t" style="left:952.4px;top:683.5px;line-height:13.0px;letter-spacing:0.19px;"><u>E</u>ditar</div>
<div class="a btn" style="left:1008px;top:678px;width:74px;height:25px;"></div>
<div class="t" style="left:1030.4px;top:683.5px;line-height:13.0px;letter-spacing:0.21px;"><u>N</u>ovo</div>
<div class="a btn" style="left:932px;top:707px;width:74px;height:25px;"></div>
<div class="t" style="left:946.1px;top:712.5px;line-height:13.0px;letter-spacing:0.20px;"><u>I</u>mprimir</div>
<div class="a btn" style="left:1008px;top:707px;width:74px;height:25px;"></div>
<div class="t" style="left:1021.2px;top:712.5px;line-height:13.0px;letter-spacing:0.07px;"><u>T</u>erminar</div>
</body></html>
